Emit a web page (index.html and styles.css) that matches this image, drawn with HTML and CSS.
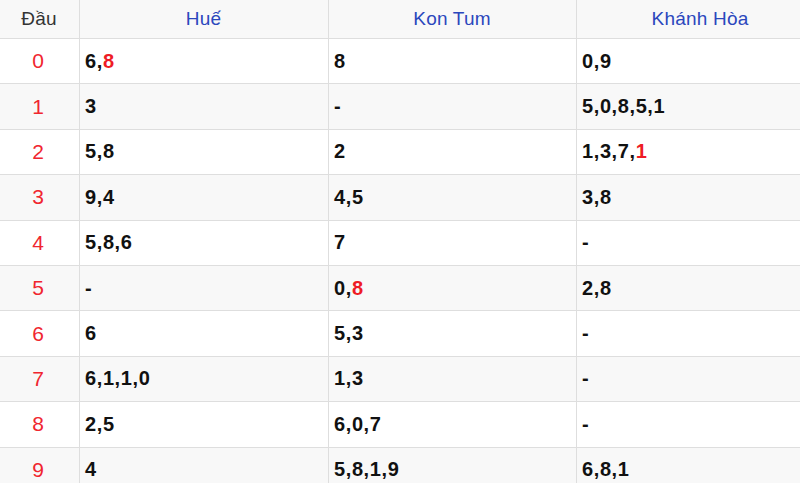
FILE: index.html
```html
<!DOCTYPE html>
<html lang="vi">
<head>
<meta charset="utf-8">
<title>Lô tô đầu</title>
<link rel="stylesheet" href="styles.css">
</head>
<body>
<div class="frame">
<table class="loto">
  <colgroup>
    <col class="c-head">
    <col class="c-a">
    <col class="c-b">
    <col class="c-c">
  </colgroup>
  <thead>
    <tr>
      <th class="h-dau">Đầu</th>
      <th>Huế</th>
      <th>Kon Tum</th>
      <th>Khánh Hòa</th>
    </tr>
  </thead>
  <tbody>
    <tr><td class="dau">0</td><td>6,<span class="hl">8</span></td><td>8</td><td>0,9</td></tr>
    <tr><td class="dau">1</td><td>3</td><td>-</td><td>5,0,8,5,1</td></tr>
    <tr><td class="dau">2</td><td>5,8</td><td>2</td><td>1,3,7,<span class="hl">1</span></td></tr>
    <tr><td class="dau">3</td><td>9,4</td><td>4,5</td><td>3,8</td></tr>
    <tr><td class="dau">4</td><td>5,8,6</td><td>7</td><td>-</td></tr>
    <tr><td class="dau">5</td><td>-</td><td>0,<span class="hl">8</span></td><td>2,8</td></tr>
    <tr><td class="dau">6</td><td>6</td><td>5,3</td><td>-</td></tr>
    <tr><td class="dau">7</td><td>6,1,1,0</td><td>1,3</td><td>-</td></tr>
    <tr><td class="dau">8</td><td>2,5</td><td>6,0,7</td><td>-</td></tr>
    <tr><td class="dau">9</td><td>4</td><td>5,8,1,9</td><td>6,8,1</td></tr>
  </tbody>
</table>
</div>
</body>
</html>
```
FILE: styles.css
```css
html, body {
  margin: 0;
  padding: 0;
  background: #ffffff;
}

.frame {
  width: 800px;
  height: 483px;
  overflow: hidden;
}

.loto {
  width: 825px;
  table-layout: fixed;
  border-collapse: collapse;
  font-family: "Liberation Sans", Arial, sans-serif;
  margin-left: -1px;
  margin-top: -1px;
}

.c-head { width: 80px; }
.c-a { width: 249px; }
.c-b { width: 248px; }
.c-c { width: 248px; }

.loto th,
.loto td {
  border: 1.5px solid #dedede;
  padding: 0 6px 0 5px;
  vertical-align: middle;
}

.loto thead tr {
  height: 39px;
  background: #f8f8f8;
}

.loto th {
  font-weight: normal;
  font-size: 19px;
  color: #2b47bd;
  text-align: center;
  letter-spacing: 0.2px;
}

.loto th.h-dau {
  color: #333333;
}

.loto tbody tr {
  height: 45.4px;
}

.loto tbody tr:nth-child(even) {
  background: #f8f8f8;
}

.loto td {
  font-size: 20px;
  font-weight: bold;
  color: #111111;
  letter-spacing: 0.6px;
}

.loto td.dau {
  font-size: 21px;
  font-weight: normal;
  color: #f0262f;
  text-align: center;
  letter-spacing: 0;
  padding: 0 7px 0 4px;
}

.hl {
  color: #ee1c25;
}
```
